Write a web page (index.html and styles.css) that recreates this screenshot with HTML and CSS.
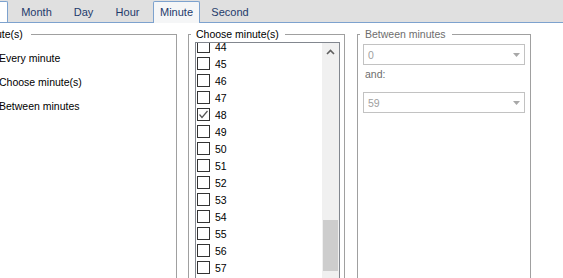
FILE: index.html
```html
<!DOCTYPE html>
<html lang="en">
<head>
    <meta charset="UTF-8">
    <title>Schedule - Minute</title>
    <link rel="stylesheet" href="styles.css">
</head>
<body>
<!-- Tab strip -->
<div class="tabs">
    <div class="tab tab-first"></div>
    <div class="tab tab-month">Month</div>
    <div class="tab tab-day">Day</div>
    <div class="tab tab-hour">Hour</div>
    <div class="tab tab-minute selected">Minute</div>
    <div class="tab tab-second">Second</div>
</div>

<!-- Minute page -->
<div class="panel">
    <fieldset class="group group-mode">
        <legend>Minute(s)</legend>
        <label class="radio"><span class="radio-dot"></span>Every minute</label>
        <label class="radio"><span class="radio-dot checked"></span>Choose minute(s)</label>
        <label class="radio"><span class="radio-dot"></span>Between minutes</label>
    </fieldset>

    <fieldset class="group group-choose">
        <legend>Choose minute(s)</legend>
        <div class="listbox">
            <div class="list-items">
                <div class="item first"><span class="check"></span>44</div>
                <div class="item"><span class="check"></span>45</div>
                <div class="item"><span class="check"></span>46</div>
                <div class="item"><span class="check"></span>47</div>
                <div class="item"><span class="check"><svg width="11" height="11" viewBox="0 0 11 11"><polyline points="1.5,5.5 4,8.5 9.5,2" fill="none" stroke="#555" stroke-width="1.2"/></svg></span>48</div>
                <div class="item"><span class="check"></span>49</div>
                <div class="item"><span class="check"></span>50</div>
                <div class="item"><span class="check"></span>51</div>
                <div class="item"><span class="check"></span>52</div>
                <div class="item"><span class="check"></span>53</div>
                <div class="item"><span class="check"></span>54</div>
                <div class="item"><span class="check"></span>55</div>
                <div class="item"><span class="check"></span>56</div>
                <div class="item"><span class="check"></span>57</div>
            </div>
            <div class="scrollbar">
                <div class="scroll-up">
                    <svg width="9" height="6" viewBox="0 0 9 6"><polyline points="1,5 4.5,1.5 8,5" fill="none" stroke="#606060" stroke-width="1.6"/></svg>
                </div>
                <div class="scroll-thumb"></div>
            </div>
        </div>
    </fieldset>

    <fieldset class="group group-between">
        <legend>Between minutes</legend>
        <div class="combo">
            <span>0</span>
            <svg width="7" height="4" viewBox="0 0 7 4"><polygon points="0,0 7,0 3.5,4" fill="#a8a8a8"/></svg>
        </div>
        <div class="combo-label">and:</div>
        <div class="combo combo-end">
            <span>59</span>
            <svg width="7" height="4" viewBox="0 0 7 4"><polygon points="0,0 7,0 3.5,4" fill="#a8a8a8"/></svg>
        </div>
    </fieldset>
</div>
</body>
</html>
```

FILE: styles.css
```css
* {
    margin: 0;
    padding: 0;
    box-sizing: border-box;
}

body {
    font-family: "Liberation Sans", Arial, sans-serif;
    font-size: 10.5px;
    color: #000;
    background-color: #fff;
    overflow: hidden;
    width: 563px;
    height: 278px;
}

/* Tab strip */
.tabs {
    display: flex;
    align-items: flex-end;
    height: 23px;
    background-color: #e0e0e0;
    border-bottom: 1px solid #7da2ce;
    font-size: 11px;
}

.tab {
    height: 21px;
    padding-top: 4px;
    text-align: center;
    color: #1e3a6b;
    line-height: 14px;
}

.tab-first {
    width: 8px;
    height: 21px;
    background-color: #fff;
    border: 1px solid #7da2ce;
    border-left: none;
    border-bottom: none;
    border-top-right-radius: 2px;
}

.tab-month { width: 57px; }
.tab-day { width: 37px; }
.tab-hour { width: 51px; }
.tab-second { width: 60px; }

.tab-minute {
    width: 47px;
}

.tab.selected {
    height: 22px;
    margin-bottom: -1px;
    background-color: #f5f6f7;
    border: 1px solid #7da2ce;
    border-bottom: none;
    border-radius: 2px 2px 0 0;
    padding-top: 3px;
}

/* Page body */
.panel {
    display: flex;
    margin-left: -40px;
    padding-top: 5px;
}

.group {
    height: 260px;
    border: 1px solid #a0a0a0;
    min-width: 0;
}

.group legend {
    padding: 0 6px 0 5px;
    line-height: 13px;
}

.group-mode {
    width: 209px;
    margin-left: 8px;
    padding: 5px 0 0 12px;
}

.group-mode legend {
    margin-left: -7px;
    padding-right: 8px;
}

.group-choose {
    width: 157px;
    margin-left: 11px;
    padding: 1px 4px 0 6px;
}

.group-choose legend {
    margin-left: -4px;
}

.group-between {
    width: 174px;
    margin-left: 12px;
    padding: 3px 5px 0 5px;
    color: #6d6d6d;
}

.group-between legend {
    margin-left: -3px;
}

/* Radio buttons */
.radio {
    display: flex;
    align-items: center;
    height: 24px;
    gap: 5px;
}

.radio-dot {
    width: 13px;
    height: 13px;
    border: 1px solid #333;
    border-radius: 50%;
    background-color: #fff;
}

.radio-dot.checked {
    background: radial-gradient(circle, #333 0 3px, #fff 3.5px);
}

/* Check list */
.listbox {
    display: flex;
    height: 250px;
    border: 1px solid #82878f;
    background-color: #fff;
    overflow: hidden;
}

.list-items {
    flex: 1;
}

.item {
    display: flex;
    align-items: center;
    height: 17px;
    gap: 5px;
    padding-left: 1px;
}

.item.first {
    margin-top: -5px;
}

.check {
    width: 13px;
    height: 13px;
    border: 1px solid #333;
    background-color: #fff;
    display: flex;
    align-items: center;
    justify-content: center;
}

.scrollbar {
    width: 17px;
    background-color: #f0f0f0;
    display: flex;
    flex-direction: column;
    align-items: center;
}

.scroll-up {
    height: 17px;
    display: flex;
    align-items: center;
    justify-content: center;
}

.scroll-thumb {
    width: 15px;
    height: 51px;
    margin-top: 160px;
    background-color: #cdcdcd;
}

/* Disabled combo boxes */
.combo {
    display: flex;
    align-items: center;
    justify-content: space-between;
    height: 21px;
    padding: 0 4px 0 4px;
    border: 1px solid #c2c2c2;
    background-color: #fff;
    color: #a0a0a0;
}

.combo-label {
    padding: 3px 0 0 2px;
    line-height: 13px;
}

.combo-end {
    margin-top: 11px;
}
```
